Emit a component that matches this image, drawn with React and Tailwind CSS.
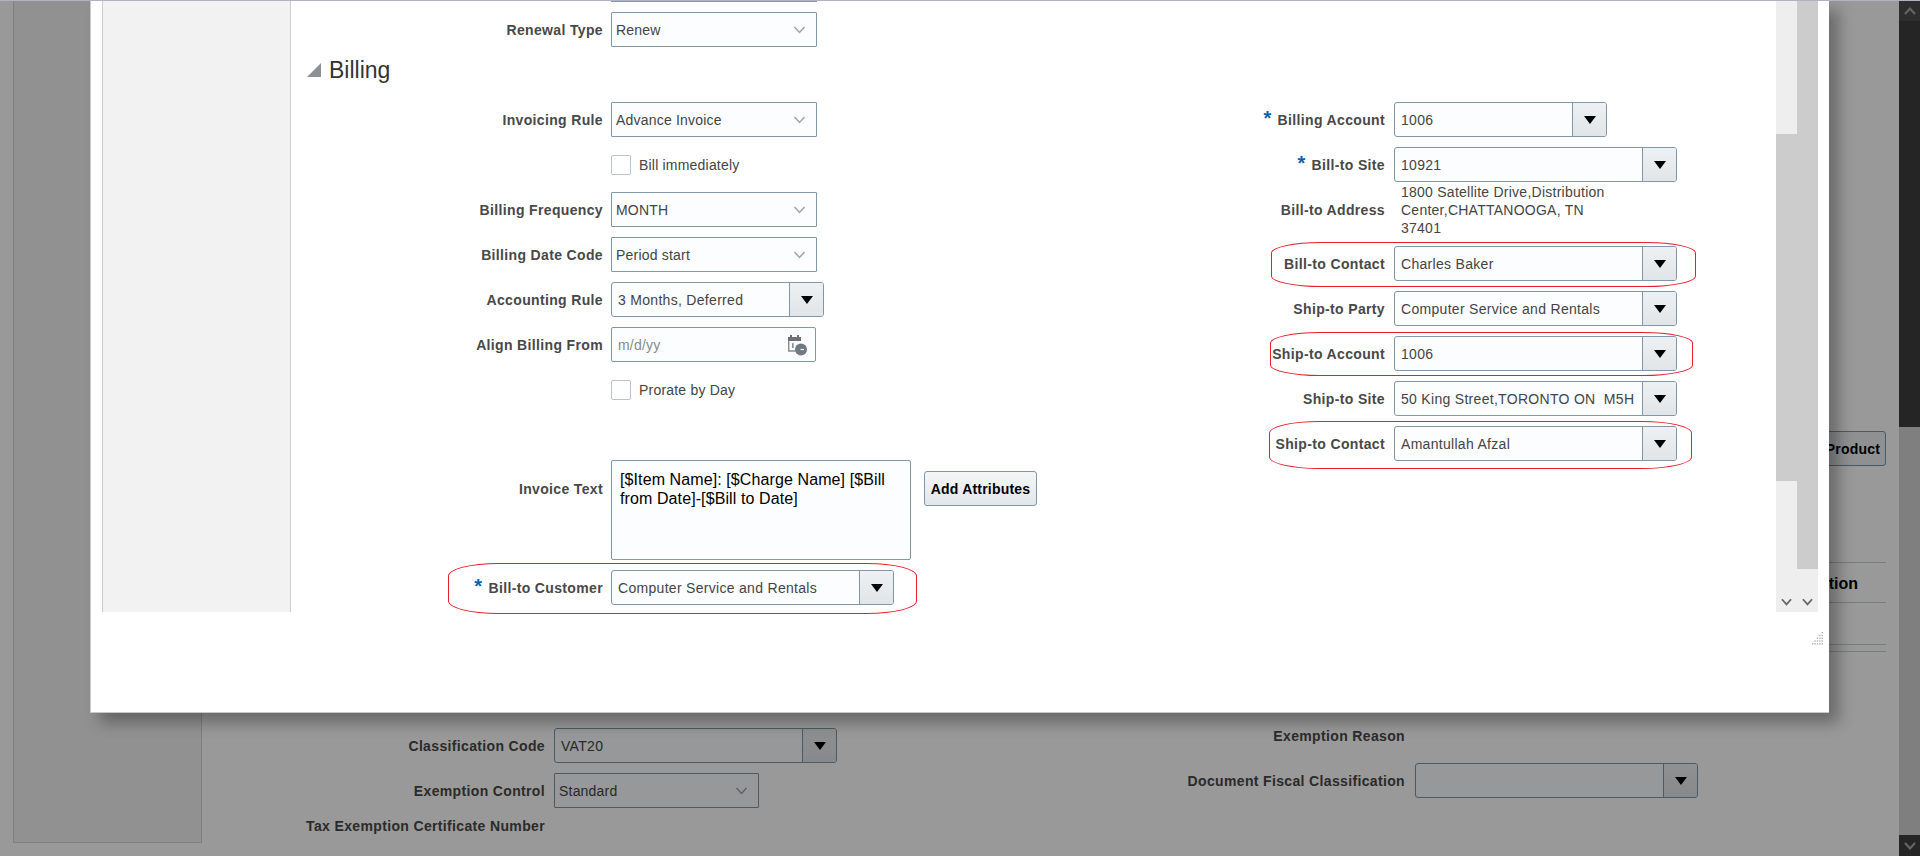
import React from 'react';

function Chevron({ className = 'w-[13px] h-[8px] text-[#9aa5ad]', width = 1.5 }) {
  return (
    <svg viewBox="0 0 12 8" className={className} fill="none" stroke="currentColor" strokeWidth={width}>
      <path d="M1 1l5 5.5L11 1" />
    </svg>
  );
}

function Label({ children, required, className = 'w-[312px] mr-[8px]' }) {
  return (
    <div className={`shrink-0 pt-[1px] text-right text-[14px] font-bold tracking-[0.35px] text-[#484848] whitespace-nowrap ${className}`}>
      {required && <span className="text-[20px] leading-[0] text-[#0a62ad] mr-[6px]">*</span>}
      {children}
    </div>
  );
}

function Choice({ value, className = 'w-[206px]' }) {
  return (
    <div className={`h-[35px] flex items-center justify-between border border-[#7f97a8] bg-[#fbfdff] pl-[4px] pr-[10px] text-[14px] tracking-[0.2px] text-[#444] rounded-[1px] ${className}`}>
      <span className="pt-[1px]">{value}</span>
      <Chevron />
    </div>
  );
}

function Combo({ value, className = 'w-[283px]' }) {
  return (
    <div className={`h-[35px] flex border border-[#7f97a8] bg-[#fbfdff] text-[14px] tracking-[0.3px] text-[#444] rounded-[3px] overflow-hidden ${className}`}>
      <span className="flex-1 min-w-0 ml-[6px] mr-[6px] leading-[34px] overflow-hidden whitespace-pre">{value}</span>
      <span className="w-[34px] shrink-0 flex items-center justify-center border-l border-[#7f97a8] bg-gradient-to-b from-[#eef1f3] to-[#e1e5e8]">
        <span className="w-0 h-0 border-x-[6px] border-x-transparent border-t-[8px] border-t-black" />
      </span>
    </div>
  );
}

function Row({ children, className = '' }) {
  return <div className={`h-[35px] flex items-center ${className}`}>{children}</div>;
}

function Circle({ className }) {
  return <span className={`absolute border border-[#e8202e] pointer-events-none ${className}`} />;
}

function CheckRow({ text }) {
  return (
    <Row className="pl-[320px]">
      <span className="w-[20px] h-[20px] border border-[#b9c4cc] bg-white rounded-[2px]" />
      <span className="ml-[8px] pt-[1px] text-[14px] tracking-[0.2px] text-[#444]">{text}</span>
    </Row>
  );
}

function CalendarIcon() {
  return (
    <svg viewBox="0 0 22 22" className="w-[22px] h-[22px]">
      <path d="M2 3h2V1h2v2h5V1h2v2h2v4H2z" fill="#707070" />
      <path d="M2.7 7v10h7" fill="none" stroke="#8a8a8a" strokeWidth="1.4" />
      <path d="M6 9.5l1.6-1V14H6z" fill="#8a8a8a" />
      <circle cx="15" cy="15.5" r="6" fill="#6f7a82" />
      <path d="M14.5 15.5h3.5" stroke="#eef" strokeWidth="1.2" />
    </svg>
  );
}

function ResizeGrip() {
  const dots = [];
  for (let row = 0; row < 5; row++) {
    for (let col = 4 - row; col < 5; col++) {
      dots.push(<rect key={`${row}-${col}`} x={col * 2.4} y={row * 2.8} width="1.3" height="1.3" fill="#a5a5a5" />);
    }
  }
  return (
    <svg viewBox="0 0 11 13" className="absolute right-[6px] bottom-[67px] w-[11px] h-[13px]">
      {dots}
    </svg>
  );
}

function InnerScrollbars() {
  return (
    <div className="w-[42px] shrink-0 flex">
      <div className="w-[21px] flex flex-col">
        <div className="h-[134px] bg-[#eeeeee]" />
        <div className="h-[347px] bg-[#cccccc]" />
        <div className="flex-1 bg-[#eeeeee] flex items-end justify-center pb-[6px]">
          <Chevron className="w-[11px] h-[8px] text-[#666]" width={2} />
        </div>
      </div>
      <div className="w-[21px] flex flex-col">
        <div className="h-[569px] bg-[#cccccc]" />
        <div className="flex-1 bg-[#eeeeee] flex items-end justify-center pb-[6px]">
          <Chevron className="w-[11px] h-[8px] text-[#666]" width={2} />
        </div>
      </div>
    </div>
  );
}

function BillingForm() {
  return (
    <div className="flex-1 flex min-w-0">
      <div className="w-[780px] shrink-0 flex flex-col gap-[10px]">
        <div className="h-[2px] ml-[320px] w-[206px] border-b border-x border-[#7f97a8] rounded-b-[1px]" />
        <Row>
          <Label>Renewal Type</Label>
          <Choice value="Renew" />
        </Row>
        <Row className="pl-[16px] pb-[9px]">
          <span className="w-0 h-0 border-l-[14px] border-l-transparent border-b-[14px] border-b-[#8b9094]" />
          <h2 className="ml-[8px] text-[23px] leading-[26px] text-[#333]">Billing</h2>
        </Row>
        <Row>
          <Label>Invoicing Rule</Label>
          <Choice value="Advance Invoice" />
        </Row>
        <CheckRow text="Bill immediately" />
        <Row>
          <Label>Billing Frequency</Label>
          <Choice value="MONTH" />
        </Row>
        <Row>
          <Label>Billing Date Code</Label>
          <Choice value="Period start" />
        </Row>
        <Row>
          <Label>Accounting Rule</Label>
          <Combo value="3 Months, Deferred" className="w-[213px]" />
        </Row>
        <Row>
          <Label>Align Billing From</Label>
          <div className="w-[205px] h-[35px] flex items-center justify-between border border-[#7f97a8] bg-[#fbfdff] rounded-[2px] pl-[6px] pr-[7px] text-[14px] tracking-[0.2px] text-[#8a8a8a]">
            <span className="pt-[1px]">m/d/yy</span>
            <CalendarIcon />
          </div>
        </Row>
        <CheckRow text="Prorate by Day" />
        <div className="mt-[43px] h-[100px] flex items-start">
          <Label className="w-[312px] mr-[8px] mt-[18px]">Invoice Text</Label>
          <div className="w-[300px] h-[100px] border border-[#7f97a8] bg-[#fbfdff] rounded-[2px] pl-[8px] pr-[6px] pt-[9px] text-[16px] tracking-[0.1px] leading-[19px] text-black">
            [$Item Name]: [$Charge Name] [$Bill from Date]-[$Bill to Date]
          </div>
          <button className="ml-[13px] mt-[11px] w-[113px] h-[35px] border border-[#7f97a8] bg-gradient-to-b from-[#f4f6f7] to-[#e3e7ea] rounded-[3px] pt-[1px] text-[14px] font-bold tracking-[0.2px] text-black">
            Add Attributes
          </button>
        </div>
        <Row className="relative">
          <Circle className="left-[157px] -top-[7px] w-[469px] h-[51px] rounded-[50px/13px]" />
          <Label required>Bill-to Customer</Label>
          <Combo value="Computer Service and Rentals" />
        </Row>
      </div>

      <div className="w-[614px] shrink-0 pt-[102px] flex flex-col gap-[10px]">
        <Row>
          <Label required className="w-[314px] mr-[9px]">Billing Account</Label>
          <Combo value="1006" className="w-[213px]" />
        </Row>
        <Row>
          <Label required className="w-[314px] mr-[9px]">Bill-to Site</Label>
          <Combo value="10921" />
        </Row>
        <div className="h-[53px] -mt-[9px] flex items-center">
          <Label className="w-[314px] mr-[9px]">Bill-to Address</Label>
          <div className="w-[218px] pl-[7px] text-[14px] tracking-[0.25px] leading-[18px] text-[#444]">
            1800 Satellite Drive,Distribution Center,CHATTANOOGA, TN 37401
          </div>
        </div>
        <Row className="relative">
          <Circle className="left-[200px] -top-[4px] w-[425px] h-[45px] rounded-[50px/11px]" />
          <Label className="w-[314px] mr-[9px]">Bill-to Contact</Label>
          <Combo value="Charles Baker" />
        </Row>
        <Row>
          <Label className="w-[314px] mr-[9px]">Ship-to Party</Label>
          <Combo value="Computer Service and Rentals" />
        </Row>
        <Row className="relative">
          <Circle className="left-[199px] -top-[4px] w-[423px] h-[44px] rounded-[50px/11px]" />
          <Label className="w-[314px] mr-[9px]">Ship-to Account</Label>
          <Combo value="1006" />
        </Row>
        <Row>
          <Label className="w-[314px] mr-[9px]">Ship-to Site</Label>
          <Combo value="50 King Street,TORONTO ON  M5H 1A1" />
        </Row>
        <Row className="relative">
          <Circle className="left-[198px] -top-[5px] w-[423px] h-[48px] rounded-[50px/12px]" />
          <Label className="w-[314px] mr-[9px]">Ship-to Contact</Label>
          <Combo value="Amantullah Afzal" />
        </Row>
      </div>
    </div>
  );
}

function PageBehind() {
  return (
    <div className="absolute inset-0 flex bg-white">
      <div className="ml-[13px] w-[189px] h-[843px] shrink-0 bg-[#f2f2f2] border-x border-b border-[#d4d4d4]" />
      <div className="flex-1 min-w-0 pt-[431px] pr-[13px] flex flex-col">
        <div className="flex justify-end">
          <button className="w-[200px] h-[35px] border border-[#7f97a8] bg-[#eef1f3] rounded-[3px] pt-[1px] text-[14px] font-bold tracking-[0.2px] text-black text-right pr-[5px]">
            Add Product
          </button>
        </div>
        <div className="mt-[96px] h-[41px] border-y border-[#c9d0d5] flex items-center justify-end pt-[2px] pr-[28px] text-[16px] font-bold text-black">
          Description
        </div>
        <div className="mt-[41px] h-[8px] border-y border-[#c9d0d5]" />
        <div className="mt-[66px] flex">
          <div className="w-[860px] shrink-0 pt-[10px] flex flex-col gap-[10px]">
            <Row>
              <Label className="w-[343px] mr-[9px]">Classification Code</Label>
              <Combo value="VAT20" />
            </Row>
            <Row>
              <Label className="w-[343px] mr-[9px]">Exemption Control</Label>
              <Choice value="Standard" className="w-[205px]" />
            </Row>
            <div className="h-[18px] -mt-[1px] flex items-center">
              <Label className="w-[343px] mr-[9px]">Tax Exemption Certificate Number</Label>
            </div>
          </div>
          <div className="flex-1 flex flex-col gap-[10px]">
            <Row>
              <Label className="w-[343px] mr-[10px]">Exemption Reason</Label>
            </Row>
            <Row>
              <Label className="w-[343px] mr-[10px]">Document Fiscal Classification</Label>
              <Combo value="" />
            </Row>
          </div>
        </div>
      </div>
      <div className="w-[21px] shrink-0 flex flex-col bg-[#d4d4d4]">
        <div className="h-[21px] bg-[#4d4d4d] flex items-center justify-center">
          <Chevron className="w-[12px] h-[8px] rotate-180 text-[#aaaaaa]" width={2} />
        </div>
        <div className="h-[406px] bg-[#3f3f3f]" />
        <div className="flex-1" />
        <div className="h-[21px] bg-[#3f3f3f] flex items-center justify-center">
          <Chevron className="w-[12px] h-[8px] text-[#aaaaaa]" width={2} />
        </div>
      </div>
    </div>
  );
}

export default function App() {
  return (
    <div className="relative w-[1920px] h-[856px] overflow-hidden font-['Liberation_Sans',Arial,sans-serif]">
      <PageBehind />
      <div className="absolute inset-0 bg-black/40" />

      <div className="absolute left-[90px] top-0 w-[1739px] h-[713px] bg-white border-l border-b border-[#c8c8c8] shadow-[10px_10px_14px_rgba(0,0,0,0.3)]">
        <div className="h-[612px] flex pl-[11px] pr-[11px]">
          <div className="w-[189px] shrink-0 bg-[#f2f2f2] border-x border-[#cccccc]" />
          <BillingForm />
          <InnerScrollbars />
        </div>
        <ResizeGrip />
      </div>

      <div className="absolute top-0 inset-x-0 h-px bg-[#b3b0c6]" />
    </div>
  );
}
